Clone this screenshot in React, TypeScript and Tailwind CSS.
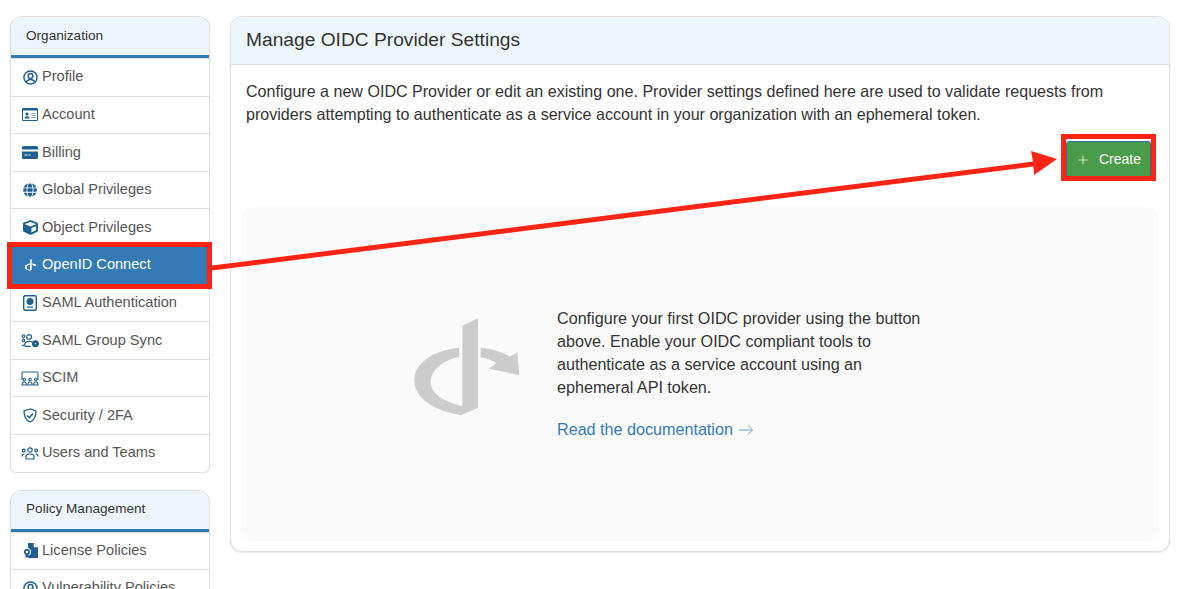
import type { ReactNode } from "react";
import { FaGlobe, FaCube } from "react-icons/fa";
import { FiPlus } from "react-icons/fi";

const ICON = "#1f5f8f";

function ProfileIcon() {
  return (
    <svg width="15" height="15" viewBox="0 0 16 16" fill="none" stroke={ICON} strokeWidth="1.5">
      <circle cx="8" cy="8" r="7" />
      <circle cx="8" cy="6.300" r="2.600" />
      <path d="M3.500 12.800c1-2 2.600-2.600 4.500-2.600s3.500.6 4.500 2.600" />
    </svg>
  );
}

function AccountIcon() {
  return (
    <svg width="16" height="13" viewBox="0 0 16 13">
      <rect width="16" height="13" rx="1" fill={ICON} />
      <rect x="1" y="2.500" width="14" height="9.500" fill="#fff" />
      <circle cx="5" cy="6" r="1.600" fill={ICON} />
      <path d="M2.500 10.500c0-1.500 1-2.200 2.500-2.200s2.500.7 2.500 2.200z" fill={ICON} />
      <path d="M9.500 5.500h4M9.500 7.500h4M9.500 9.500h4" stroke="#7fa6c4" strokeWidth="1" />
    </svg>
  );
}

function BillingIcon() {
  return (
    <svg width="16" height="13" viewBox="0 0 16 13">
      <rect width="16" height="13" rx="1.500" fill={ICON} />
      <rect y="3.500" width="16" height="2" fill="#fff" />
      <path d="M2.500 9h3M6.500 9h2" stroke="#fff" strokeWidth="1" />
    </svg>
  );
}

function OidcIcon({ color = "#fff" }: { color?: string }) {
  return (
    <svg width="13" height="12" viewBox="40 20 320 330" fill={color}>
      <path d="M234 20 187 42V318C130 305 92 280 92 245 92 210 130 180 178 170V143C100 150 43 190 43 240 43 295 105 335 185 345L234 323Z" />
      <path d="M242 143C280 147 310 157 330 170L352 157 358 225 266 206 290 190C278 182 262 176 242 172Z" />
    </svg>
  );
}

function PassportIcon() {
  return (
    <svg width="14" height="16" viewBox="0 0 14 16" fill="none">
      <rect x=".7" y=".7" width="12.600" height="14.600" rx="1.500" stroke={ICON} strokeWidth="1.400" />
      <circle cx="7" cy="6.500" r="3.500" fill={ICON} />
      <path d="M4 12.200h6" stroke={ICON} strokeWidth="1.200" />
    </svg>
  );
}

function GroupSyncIcon() {
  return (
    <svg width="19" height="15" viewBox="0 0 20 15" fill="none" stroke={ICON} strokeWidth="1.300">
      <circle cx="9" cy="3.500" r="2.600" />
      <circle cx="2.800" cy="2.800" r="1.500" />
      <circle cx="2.800" cy="7.500" r="1.300" />
      <path d="M1 13h3c0-3 2-4.500 5-4.500 1.500 0 2.500.3 3.500 1" />
      <path d="M4 14h7" />
      <circle cx="16" cy="11" r="3.200" fill={ICON} />
      <circle cx="16" cy="11" r=".8" fill="#fff" stroke="none" />
    </svg>
  );
}

function ScimIcon() {
  return (
    <svg width="18" height="15" viewBox="0 0 18 15" fill="none" stroke={ICON} strokeWidth="1.100">
      <path d="M1 9V2a1 1 0 0 1 1-1h14a1 1 0 0 1 1 1v7" />
      <circle cx="3.200" cy="8.500" r="1.300" />
      <circle cx="9" cy="8.500" r="1.300" />
      <circle cx="14.800" cy="8.500" r="1.300" />
      <path d="M1 14c0-2 .8-3 2.200-3s2.200 1 2.200 3zM6.800 14c0-2 .8-3 2.200-3s2.200 1 2.200 3zM12.600 14c0-2 .8-3 2.200-3s2.200 1 2.200 3z" />
    </svg>
  );
}

function ShieldIcon() {
  return (
    <svg width="14" height="15" viewBox="0 0 14 15" fill="none" stroke={ICON} strokeWidth="1.300">
      <path d="M7 1 1 3c0 5 1.500 9 6 11 4.500-2 6-6 6-11z" />
      <path d="m4 7.500 2.200 2.200L10 5.500" strokeWidth="1.500" />
    </svg>
  );
}

function UsersIcon() {
  return (
    <svg width="18" height="13" viewBox="0 0 18 13" fill="none" stroke={ICON} strokeWidth="1.200">
      <circle cx="9" cy="3" r="2.200" />
      <circle cx="2.800" cy="3.500" r="1.400" />
      <circle cx="15.200" cy="3.500" r="1.400" />
      <path d="M5 12V9.500C5 7.800 6.500 7 9 7s4 .8 4 2.500V12z" />
      <path d="M1 9.500C1 7.800 1.800 7 3.500 7M17 9.500C17 7.800 16.200 7 14.500 7" />
    </svg>
  );
}

function LicenseIcon() {
  return (
    <svg width="15" height="15" viewBox="0 0 15 15">
      <path d="M5 0h6l4 4v11H5z" fill={ICON} />
      <path d="M11 0v4h4" fill="#fff" stroke="#fff" strokeWidth=".6" />
      <circle cx="4" cy="9" r="3.700" fill={ICON} stroke="#fff" strokeWidth="1" />
      <circle cx="4" cy="9" r="1.300" fill="#fff" />
      <path d="M2.500 12v3L4 14l1.500 1v-3z" fill={ICON} />
    </svg>
  );
}

type NavItem = { label: string; icon: ReactNode; active?: boolean };

const orgItems: NavItem[] = [
  { label: "Profile", icon: <ProfileIcon /> },
  { label: "Account", icon: <AccountIcon /> },
  { label: "Billing", icon: <BillingIcon /> },
  { label: "Global Privileges", icon: <FaGlobe size={14} color={ICON} /> },
  { label: "Object Privileges", icon: <FaCube size={15} color={ICON} /> },
  { label: "OpenID Connect", icon: <OidcIcon />, active: true },
  { label: "SAML Authentication", icon: <PassportIcon /> },
  { label: "SAML Group Sync", icon: <GroupSyncIcon /> },
  { label: "SCIM", icon: <ScimIcon /> },
  { label: "Security / 2FA", icon: <ShieldIcon /> },
  { label: "Users and Teams", icon: <UsersIcon /> },
];

function Row({ item }: { item: NavItem }) {
  return (
    <div
      className={
        "flex h-[37.6px] items-center border-t border-[#dddddd] pl-[10px] text-[14.6px] " +
        (item.active ? "bg-[#337ab7] text-white" : "bg-white text-[#555555]")
      }
    >
      <span className="mr-[3px] flex w-[18px] shrink-0 justify-center">{item.icon}</span>
      <span>{item.label}</span>
    </div>
  );
}

function SideCard({ title, children }: { title: string; children: ReactNode }) {
  return (
    <div className="shrink-0 overflow-hidden rounded-t-xl rounded-b-md border-x border-t border-[#dddddd] bg-white shadow-[0_1px_1px_rgba(0,0,0,0.15)]">
      <div className="box-content flex h-[38px] items-center border-b-[3px] border-b-[#337ab7] bg-[#eef6fd] pl-[15px] text-[13.6px] text-[#333333]">
        {title}
      </div>
      {children}
    </div>
  );
}

export default function App() {
  return (
    <div className="relative flex h-[589px] w-[1201px] overflow-hidden bg-white font-['Liberation_Sans',Arial,sans-serif]">
      <div className="ml-[10px] mt-4 flex w-[200px] shrink-0 flex-col gap-[18px]">
        <SideCard title="Organization">
          {orgItems.map((item) => (
            <Row key={item.label} item={item} />
          ))}
        </SideCard>
        <SideCard title="Policy Management">
          <Row item={{ label: "License Policies", icon: <LicenseIcon /> }} />
          <Row item={{ label: "Vulnerability Policies", icon: <ProfileIcon /> }} />
        </SideCard>
      </div>

      <div className="ml-5 mt-4 h-[536px] w-[940px] rounded-xl border border-[#dddddd] bg-white shadow-[0_1px_1px_rgba(0,0,0,0.1)]">
        <div className="flex h-[48px] items-center rounded-t-xl border-b border-[#dddddd] bg-[#eef6fd] pb-px pl-[15px] text-[19.2px] text-[#333333]">
          Manage OIDC Provider Settings
        </div>
        <div className="px-[15px] pt-[15px] text-[16.07px] leading-[23px] text-[#333333]">
          <p>
            Configure a new OIDC Provider or edit an existing one. Provider settings defined here are used to validate requests from
            providers attempting to authenticate as a service account in your organization with an ephemeral token.
          </p>
        </div>
        <div className="mr-[18px] mt-[15px] flex justify-end">
          <button className="flex h-[37px] w-[85px] items-center justify-center gap-[9px] rounded-[3px] border border-[#2e6da4] bg-[#4a9c4a] text-[14px] text-white">
            <FiPlus size={14} className="opacity-70" />
            Create
          </button>
        </div>
        <div className="mx-[10px] mt-[29px] flex h-[334px] rounded-xl bg-[#fafafa]">
          <div className="ml-[159px] mt-[93px] w-[140px] shrink-0">
            <svg width="140" height="130" viewBox="0 0 420 390" fill="#cccccc">
              <path d="M234 55 187 77V318C130 305 92 280 92 245 92 210 130 180 178 170V143C100 150 43 190 43 240 43 295 105 335 185 345L234 323Z" />
              <path d="M242 143C280 147 310 157 330 170L352 157 358 225 266 206 290 190C278 182 262 176 242 172Z" />
            </svg>
          </div>
          <div className="ml-[17px] mt-[100px] w-[372px] text-[16.15px] leading-[23px] text-[#333333]">
            <p>
              Configure your first OIDC provider using the button above. Enable your OIDC compliant tools to authenticate as a service account using an ephemeral API token.
            </p>
            <p className="mt-[19px] flex items-center gap-[5px] text-[#337ab7]">
              Read the documentation
              <svg width="16" height="12" viewBox="0 0 16 12" fill="none" stroke="#337ab7" strokeWidth="1" className="opacity-70">
                <path d="M1 6h13.500M10 1.500 14.500 6 10 10.500" />
              </svg>
            </p>
          </div>
        </div>
      </div>

      {/* Red annotations drawn over the page */}
      <div className="absolute left-[7px] top-[242px] h-[47px] w-[205px] border-[5px] border-[#fc2414]" />
      <div className="absolute left-[1061px] top-[134px] h-[47px] w-[95px] border-[5px] border-[#fc2414]" />
      <svg className="absolute left-0 top-0" width="1201" height="589" fill="#fc2414">
        <path d="M212 265.500 1033 161.500 1031 151 1057 159 1034 175 1033.500 166.500 212 270.500Z" />
      </svg>
    </div>
  );
}
